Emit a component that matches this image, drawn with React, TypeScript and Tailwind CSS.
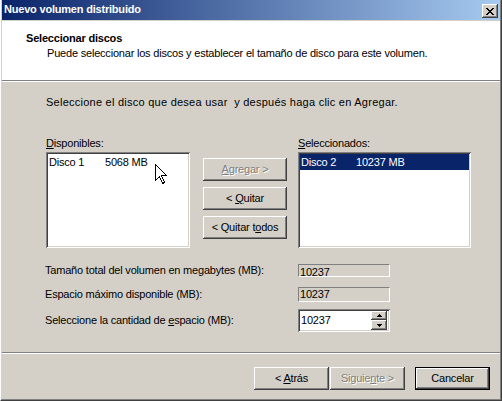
import React from "react";

const raised =
  "shadow-[inset_-1px_-1px_0_#404040,inset_1px_1px_0_#ffffff,inset_-2px_-2px_0_#808080,inset_2px_2px_0_#d4d0c8]";
const sunken =
  "shadow-[inset_1px_1px_0_#808080,inset_-1px_-1px_0_#ffffff,inset_2px_2px_0_#404040,inset_-2px_-2px_0_#d4d0c8]";
const disabledText = "text-[#808080] [text-shadow:1px_1px_0_#ffffff]";

function Btn({
  children,
  disabled,
  className = "",
}: {
  children: React.ReactNode;
  disabled?: boolean;
  className?: string;
}) {
  return (
    <div
      className={`flex items-center justify-center bg-[#d4d0c8] ${raised} ${
        disabled ? disabledText : "text-black"
      } ${className}`}
    >
      {children}
    </div>
  );
}

function CloseX() {
  const px: [number, number][] = [
    [0, 0], [1, 0], [6, 0], [7, 0],
    [1, 1], [2, 1], [5, 1], [6, 1],
    [2, 2], [3, 2], [4, 2], [5, 2],
    [3, 3], [4, 3],
    [2, 4], [3, 4], [4, 4], [5, 4],
    [1, 5], [2, 5], [5, 5], [6, 5],
    [0, 6], [1, 6], [6, 6], [7, 6],
  ];
  return (
    <svg width="8" height="7" viewBox="0 0 8 7" shapeRendering="crispEdges">
      {px.map(([x, y], i) => (
        <rect key={i} x={x} y={y} width="1" height="1" fill="#000" />
      ))}
    </svg>
  );
}

function Cursor() {
  return (
    <svg
      width="13"
      height="21"
      viewBox="0 0 13 21"
      shapeRendering="crispEdges"
      className="absolute left-[154px] top-[164px]"
    >
      <path
        d="M0.5 0.5 L0.5 16.5 L4.5 12.5 L7.5 19.5 L9.5 18.5 L6.5 11.5 L11.5 11.5 Z"
        fill="#fff"
        stroke="#000"
        strokeWidth="1"
      />
    </svg>
  );
}

function SpinArrow({ up }: { up?: boolean }) {
  return (
    <svg width="5" height="3" viewBox="0 0 5 3" shapeRendering="crispEdges">
      {up ? (
        <>
          <rect x="2" y="0" width="1" height="1" fill="#000" />
          <rect x="1" y="1" width="3" height="1" fill="#000" />
          <rect x="0" y="2" width="5" height="1" fill="#000" />
        </>
      ) : (
        <>
          <rect x="0" y="0" width="5" height="1" fill="#000" />
          <rect x="1" y="1" width="3" height="1" fill="#000" />
          <rect x="2" y="2" width="1" height="1" fill="#000" />
        </>
      )}
    </svg>
  );
}

export default function App() {
  return (
    <div className="relative w-[502px] h-[401px] overflow-hidden bg-[#d4d0c8] border-l border-l-white border-r border-r-[#404040] border-b border-b-[#404040] font-['Liberation_Sans',Arial,sans-serif] text-[11px] leading-[13px] tracking-[-0.2px] text-black">
      <div className="h-full flex flex-col border-r border-r-[#808080] border-b border-b-[#808080] pl-px">
        {/* Title bar */}
        <div className="h-[20px] shrink-0 flex items-start justify-between bg-[linear-gradient(to_right,#0a246a,#a6caf0)]">
          <div className="pl-[2px] pt-[3px] font-bold text-white text-[11px] leading-[13px]">
            Nuevo volumen distribuido
          </div>
          <div
            className={`mt-[4px] mr-[2px] w-[16px] h-[14px] flex items-center justify-center bg-[#d4d0c8] ${raised}`}
          >
            <CloseX />
          </div>
        </div>
        <div className="h-px shrink-0 bg-[#d4d0c8]" />

        {/* Header */}
        <div className="h-[59px] shrink-0 bg-white flex flex-col">
          <div className="mt-[11px] pl-[24px] font-bold">Seleccionar discos</div>
          <div className="mt-[2px] pl-[45px]">
            Puede seleccionar los discos y establecer el tamaño de disco para este volumen.
          </div>
        </div>
        <div className="h-px shrink-0 bg-[#808080]" />
        <div className="h-px shrink-0 bg-white" />

        {/* Content */}
        <div className="h-[270px] shrink-0 flex flex-col">
          <div className="mt-[14px] pl-[44px] whitespace-pre tracking-[0.25px]">
            Seleccione el disco que desea usar  y después haga clic en Agregar.
          </div>

          <div className="mt-[28px] pl-[44px] flex">
            {/* Available */}
            <div className="w-[144px] flex flex-col">
              <div>
                <u>D</u>isponibles:
              </div>
              <div className={`mt-[2px] h-[96px] bg-white p-[2px] ${sunken}`}>
                <div className="h-[16px] flex items-center pl-px">
                  <span className="w-[56px]">Disco 1</span>
                  <span>5068 MB</span>
                </div>
              </div>
            </div>

            {/* Buttons */}
            <div className="ml-[13px] w-[84px] pt-[21px] flex flex-col gap-[6px]">
              <Btn disabled className="h-[23px]">
                <span>
                  <u>A</u>gregar &gt;
                </span>
              </Btn>
              <Btn className="h-[23px]">
                <span>
                  &lt; <u>Q</u>uitar
                </span>
              </Btn>
              <Btn className="h-[23px]">
                <span>
                  &lt; Quitar t<u>o</u>dos
                </span>
              </Btn>
            </div>

            {/* Selected */}
            <div className="ml-[11px] w-[173px] flex flex-col">
              <div>
                <u>S</u>eleccionados:
              </div>
              <div className={`mt-[2px] h-[96px] bg-white p-[2px] ${sunken}`}>
                <div className="h-[16px] flex items-center bg-[#0a246a] text-white pl-px">
                  <span className="w-[55px]">Disco 2</span>
                  <span>10237 MB</span>
                </div>
              </div>
            </div>
          </div>

          {/* Size rows */}
          <div className="mt-[16px] pl-[43px] flex flex-col">
            <div className="flex items-center h-[13px]">
              <div className="w-[253px]">Tamaño total del volumen en megabytes (MB):</div>
              <div className="w-[92px] h-[13px] border-t border-l border-t-[#808080] border-l-[#808080] border-b border-r border-b-white border-r-white leading-[13px] pl-px pt-px overflow-hidden">
                10237
              </div>
            </div>
            <div className="mt-[10px] flex items-center h-[15px]">
              <div className="w-[253px]">Espacio máximo disponible (MB):</div>
              <div className="w-[92px] h-[15px] border-t border-l border-t-[#808080] border-l-[#808080] border-b border-r border-b-white border-r-white flex items-center pl-px">
                10237
              </div>
            </div>
            <div className="mt-[7px] flex items-center h-[23px]">
              <div className="w-[253px]">
                Seleccione la cantidad de <u>e</u>spacio (MB):
              </div>
              <div className={`w-[92px] h-[23px] bg-white ${sunken} flex items-center justify-between p-[2px]`}>
                <span className="pl-[1px]">10237</span>
                <div className="flex flex-col mr-[1px]">
                  <div className={`w-[16px] h-[9px] bg-[#d4d0c8] ${raised} flex items-center justify-center`}>
                    <SpinArrow up />
                  </div>
                  <div className={`w-[16px] h-[10px] bg-[#d4d0c8] ${raised} flex items-center justify-center`}>
                    <SpinArrow />
                  </div>
                </div>
              </div>
            </div>
          </div>
        </div>

        <div className="h-px shrink-0 bg-[#808080]" />
        <div className="h-px shrink-0 bg-white" />

        {/* Footer */}
        <div className="flex-1 flex justify-end items-start pt-[13px] pr-[10px]">
          <Btn className="w-[75px] h-[23px]">
            <span>
              &lt; <u>A</u>trás
            </span>
          </Btn>
          <Btn disabled className="ml-px w-[75px] h-[23px]">
            <span>
              Siguie<u>n</u>te &gt;
            </span>
          </Btn>
          <div className="ml-[10px] w-[75px] h-[23px] border border-black">
            <Btn className="w-full h-full">Cancelar</Btn>
          </div>
        </div>
      </div>
      <Cursor />
    </div>
  );
}
